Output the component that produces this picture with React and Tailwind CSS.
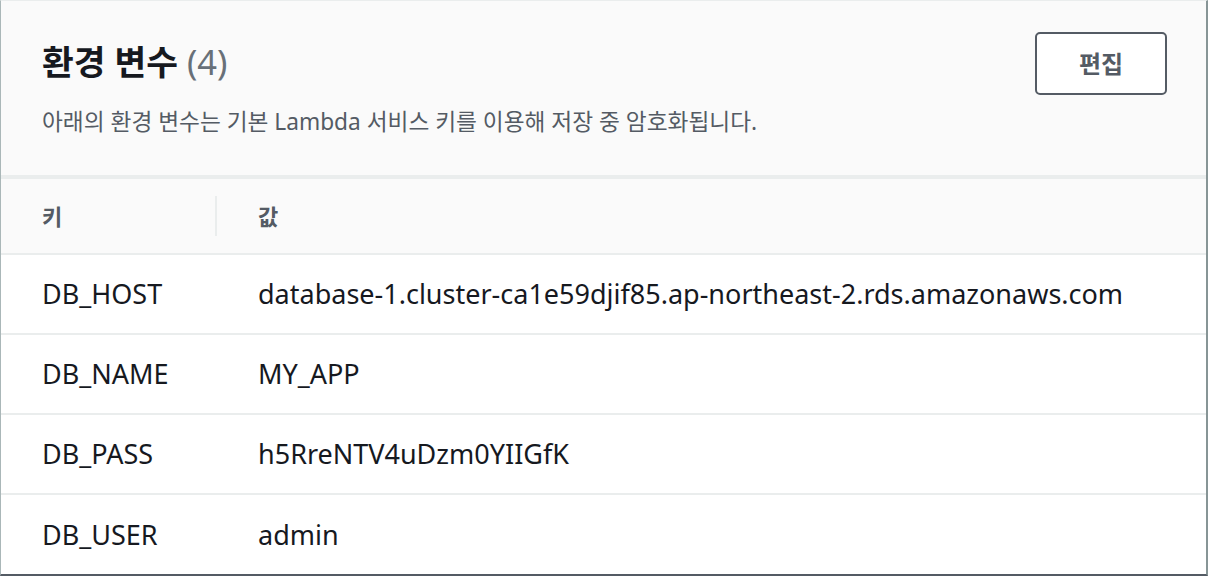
import React from 'react';

const rows = [
  { key: 'DB_HOST', value: 'database-1.cluster-ca1e59djif85.ap-northeast-2.rds.amazonaws.com' },
  { key: 'DB_NAME', value: 'MY_APP' },
  { key: 'DB_PASS', value: 'h5RreNTV4uDzm0YIIGfK' },
  { key: 'DB_USER', value: 'admin' },
];

const font = { fontFamily: '"Noto Sans", "Noto Sans CJK KR", sans-serif' };

export default function App() {
  return (
    <div className="w-[1208px] h-[576px] bg-white" style={font}>
      <div className="h-full border-l border-l-[#aab7b8] border-r-2 border-r-[#879596] border-b-2 border-b-[#545b64] border-t border-t-[#eaeded] flex flex-col">
        {/* Header */}
        <div className="bg-[#fafafa] h-[178px] shrink-0 flex justify-between pl-[41px] pr-[39px] border-b-4 border-[#eaeded]">
          <div className="pt-[36px]">
            <h2 className="text-[34.5px] font-bold text-[#16191f] leading-[50px]">
              환경 변수 <span className="font-normal text-[#687078]">(4)</span>
            </h2>
            <p className="mt-[20px] text-[22.7px] text-[#545b64] leading-[30px]">
              아래의 환경 변수는 기본 Lambda 서비스 키를 이용해 저장 중 암호화됩니다.
            </p>
          </div>
          <div className="pt-[31px]">
            <button className="w-[132px] h-[63px] bg-white border-2 border-[#545b64] rounded-[5px] text-[24px] font-bold text-[#545b64]">
              편집
            </button>
          </div>
        </div>

        {/* Table header */}
        <div className="bg-[#fafafa] h-[76px] shrink-0 flex items-center border-b-2 border-[#eaeded]">
          <div className="w-[216px] pl-[41px] border-r-2 border-[#eaeded] h-[40px] flex items-center text-[22px] font-bold text-[#545b64]">
            키
          </div>
          <div className="pl-[41px] text-[22px] font-bold text-[#545b64]">값</div>
        </div>

        {/* Rows */}
        {rows.map((row, i) => (
          <div
            key={row.key}
            className={`flex items-center h-[80px] shrink-0 text-[27px] text-[#16191f] ${i < rows.length - 1 ? 'border-b-2 border-[#eaeded]' : ''}`}
          >
            <div className="w-[216px] pl-[41px]">{row.key}</div>
            <div className="pl-[41px]">{row.value}</div>
          </div>
        ))}
      </div>
    </div>
  );
}
